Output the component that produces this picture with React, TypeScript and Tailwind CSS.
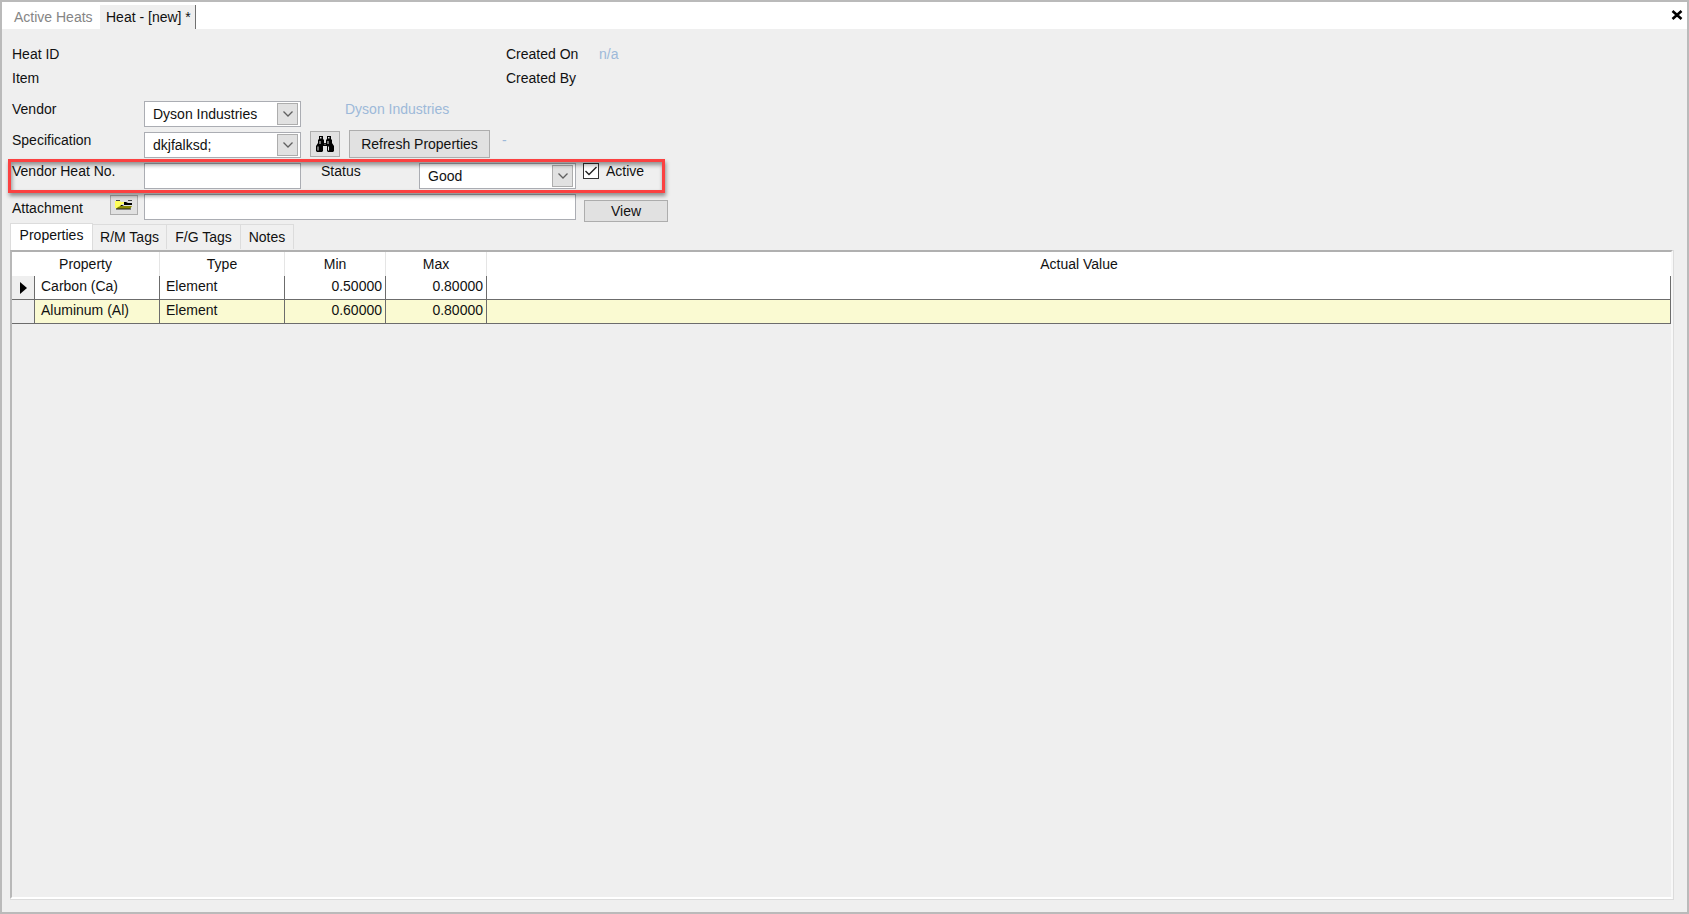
import { useState } from "react";
import type { ReactNode } from "react";

function Combo({ id, options }: { id: string; options: string[] }) {
  return (
    <div className="relative h-[26px] w-[157px] shrink-0">
      <select
        id={id}
        className="block h-full w-full appearance-none border border-[#abadb3] bg-white pr-6 pl-2 text-sm text-[#111] outline-none"
      >
        {options.map((o) => (
          <option key={o}>{o}</option>
        ))}
      </select>
      <span className="pointer-events-none absolute top-[2px] right-[3px] flex h-[22px] w-[21px] items-center justify-center border border-[#adadad] bg-[#e1e1e1]">
        <svg width="12" height="8" viewBox="0 0 12 8" fill="none" stroke="#606060" strokeWidth="1.3">
          <path d="M1.5 1.5 6 6 10.5 1.5" />
        </svg>
      </span>
    </div>
  );
}

function Row({ id, label, children }: { id: string; label: string; children?: ReactNode }) {
  return (
    <div className="flex h-[31px] items-start">
      <label htmlFor={id} className="w-[132px] shrink-0 leading-4">
        {label}
      </label>
      {children}
    </div>
  );
}

function Binoculars() {
  return (
    <svg width="20" height="18" viewBox="0 0 20 18">
      <path
        fill="#000"
        d="M4 1h4v3l1 1v3h2V5l1-1V1h4v3l1 1v3l2 3v5l-1 1h-5l-1-1v-5H8v5l-1 1H2l-1-1v-5l2-3V5l1-1z"
      />
      <path fill="#e1e1e1" d="M5 2h1.5v1.5H5zM13 2h1.5v1.5H13zM4.500 6h1v3h-1zM12.500 6h1v3h-1zM2.500 11.500h1v4h-1zM13 11.500h1v4h-1zM9.500 8.800h1v1h-1z" />
    </svg>
  );
}

function Folder() {
  return (
    <svg width="20" height="12" viewBox="0 0 20 12">
      <path fill="#ffff5c" d="M1 2h5l1 1h4v2H8L5 9H1z" />
      <path fill="#444" d="M2 1h4v1H2zM14 1h4v1h-4z" />
      <path fill="#000" d="M10 3h2l2 1h4v2h-8l-2 1-2 2H5l2-3h3z" />
      <path fill="#8a8a00" d="M7 7h11l-2 3H2l2-2z" />
      <path fill="#222" d="M2 9.500h15v1H2z" />
    </svg>
  );
}

const tabs = [
  { name: "Properties", width: "w-[83px]" },
  { name: "R/M Tags", width: "w-[74px]" },
  { name: "F/G Tags", width: "w-[74px]" },
  { name: "Notes", width: "w-[53px]" },
];

const rows = [
  { name: "Carbon (Ca)", type: "Element", min: "0.50000", max: "0.80000" },
  { name: "Aluminum (Al)", type: "Element", min: "0.60000", max: "0.80000" },
];

const button = "flex items-center justify-center border border-[#adadad] bg-[#e1e1e1] text-[#111]";

export default function App() {
  const [active, setActive] = useState(true);
  return (
    <div className="flex min-h-screen flex-col border-2 border-[#bababa] bg-[#efefef] font-['Liberation_Sans',sans-serif] text-sm text-[#111]">
      <header className="flex h-[27px] items-end bg-white">
        <button className="h-6 w-[98px] pl-3 text-left leading-4 text-[#858585]">Active Heats</button>
        <button className="h-6 w-24 border-r border-[#707070] bg-[#efefef] pl-[6px] text-left leading-4">
          Heat - [new] *
        </button>
        <button aria-label="Close" className="mr-1 mb-[9px] ml-auto">
          <svg width="12" height="10" viewBox="0 0 12 10" stroke="#000" strokeWidth="2.6">
            <path d="M1.5 1 10.5 9M10.5 1 1.5 9" />
          </svg>
        </button>
      </header>

      <main className="flex grow flex-col pr-[13px] pb-3 pl-2">
        <dl className="grid grid-cols-[494px_93px_1fr] pt-[13px] pl-[2px] leading-6">
          <dt>Heat ID</dt>
          <dt>Created On</dt>
          <dd className="text-[#9db9d9]">n/a</dd>
          <dt>Item</dt>
          <dt>Created By</dt>
        </dl>

        <form className="flex flex-col pt-[11px] pl-[2px]" onSubmit={(e) => e.preventDefault()}>
          <Row id="vendor" label="Vendor">
            <Combo id="vendor" options={["Dyson Industries"]} />
            <span className="ml-11 leading-4 text-[#9db9d9]">Dyson Industries</span>
          </Row>
          <Row id="spec" label="Specification">
            <Combo id="spec" options={["dkjfalksd;"]} />
            <div className="-mt-[2px] ml-[9px] flex items-center gap-[9px]">
              <button aria-label="Find specification" className={`${button} h-[26px] w-[30px]`}>
                <Binoculars />
              </button>
              <button className={`${button} h-7 w-[141px]`}>Refresh Properties</button>
            </div>
            <span className="ml-3 leading-4 text-[#9db9d9]">-</span>
          </Row>
          <div className="relative">
            <Row id="heat-no" label="Vendor Heat No.">
              <input id="heat-no" className="h-[26px] w-[157px] border border-[#abadb3] bg-white px-2 outline-none" />
              <label htmlFor="status" className="ml-5 w-[98px] leading-4">
                Status
              </label>
              <Combo id="status" options={["Good"]} />
              <label className="ml-[7px] flex items-center gap-[7px] leading-4">
                <span className="relative flex size-4">
                  <input
                    type="checkbox"
                    checked={active}
                    onChange={(e) => setActive(e.target.checked)}
                    className="size-4 appearance-none border border-[#333] bg-white"
                  />
                  {active && (
                    <svg
                      className="pointer-events-none absolute inset-0"
                      width="16"
                      height="16"
                      viewBox="0 0 16 16"
                      fill="none"
                      stroke="#222"
                      strokeWidth="1.4"
                    >
                      <path d="M2.500 8 6 11.500 13.500 4" />
                    </svg>
                  )}
                </span>
                Active
              </label>
            </Row>
            <div className="pointer-events-none absolute -top-1 -left-1 h-[34px] w-[657px] border-3 border-[#fb4141] shadow-[1px_3px_4px_rgba(0,0,0,0.4),inset_1px_3px_4px_rgba(0,0,0,0.4)]" />
          </div>
          <div className="flex h-[29px] items-start">
            <label htmlFor="attachment" className="w-[98px] pt-[6px] leading-4">
              Attachment
            </label>
            <button aria-label="Browse" className={`${button} mt-px mr-[6px] h-5 w-7`}>
              <Folder />
            </button>
            <input id="attachment" className="h-[26px] w-[432px] border border-[#abadb3] bg-white px-2 outline-none" />
            <button className={`${button} mt-[6px] ml-2 h-[22px] w-[84px]`}>View</button>
          </div>
        </form>

        <div role="tablist" className="flex h-[27px] items-end">
          {tabs.map((t, i) => (
            <button
              key={t.name}
              role="tab"
              aria-selected={i === 0}
              className={`${t.width} ${
                i === 0
                  ? "h-[27px] border-x border-t border-[#dcdcdc] bg-white pb-1"
                  : "mb-px h-[25px] border-t border-r border-[#dcdcdc] bg-[#f0f0f0]"
              } whitespace-nowrap`}
            >
              {t.name}
            </button>
          ))}
        </div>

        <section className="flex grow flex-col border-r border-b border-[#dcdcdc]">
          <div className="grow border-2 border-t-[#b0b0b0] border-r-[#f8f8f8] border-b-white border-l-[#b8b8b8]">
            <table className="w-full table-fixed border-separate border-spacing-0">
              <colgroup>
                <col className="w-[23px]" />
                <col className="w-[125px]" />
                <col className="w-[125px]" />
                <col className="w-[101px]" />
                <col className="w-[101px]" />
                <col />
              </colgroup>
              <thead>
                <tr className="h-6 bg-white leading-4">
                  <th colSpan={2} className="border-r border-[#e5e5e5] p-0 font-normal">
                    Property
                  </th>
                  <th className="border-r border-[#e5e5e5] p-0 font-normal">Type</th>
                  <th className="border-r border-[#e5e5e5] p-0 font-normal">Min</th>
                  <th className="border-r border-[#e5e5e5] p-0 font-normal">Max</th>
                  <th className="p-0 font-normal">Actual Value</th>
                </tr>
              </thead>
              <tbody className="[&_td]:border-r [&_td]:border-b [&_td]:border-[#6c6c6c] [&_td]:pb-1 [&_td]:leading-4">
                {rows.map((r, i) => (
                  <tr key={r.name} className={i === 0 ? "h-6 bg-white" : "h-6 bg-[#fafad2]"}>
                    <td className="bg-[#efefef]">
                      {i === 0 && (
                        <svg className="mt-1 ml-2" width="7" height="12" viewBox="0 0 7 12">
                          <path d="M0 0 7 6 0 12z" />
                        </svg>
                      )}
                    </td>
                    <td className="pl-[6px]">{r.name}</td>
                    <td className="pl-[6px]">{r.type}</td>
                    <td className="pr-[3px] text-right">{r.min}</td>
                    <td className="pr-[3px] text-right">{r.max}</td>
                    <td />
                  </tr>
                ))}
              </tbody>
            </table>
          </div>
        </section>
      </main>
    </div>
  );
}
